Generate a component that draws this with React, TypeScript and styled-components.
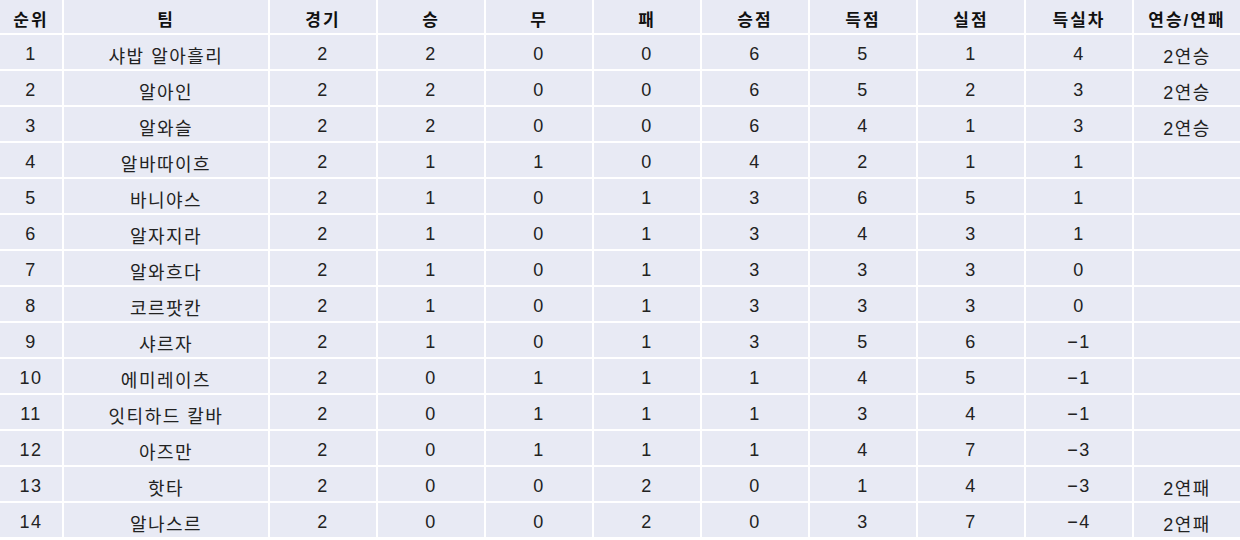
import React from 'react';
import styled, { createGlobalStyle } from 'styled-components';

const GlobalStyle = createGlobalStyle`
  html, body {
    margin: 0;
    padding: 0;
    background: #fff;
  }
  body {
    font-family: "Liberation Sans", "Noto Sans CJK KR", sans-serif;
    color: #222;
  }
`;

const Table = styled.div`
  display: grid;
  grid-template-columns: 62px 204px repeat(9, 106px);
  grid-auto-rows: 34px;
  grid-template-rows: 33px;
  gap: 2px;
  width: 1240px;
  background: #fff;
`;

const Cell = styled.div<{ $head?: boolean }>`
  display: flex;
  align-items: center;
  justify-content: center;
  padding-top: ${(p) => (p.$head ? '3px' : '5px')};
  box-sizing: border-box;
  background: #e8eaf4;
  font-size: ${(p) => (p.$head ? '17px' : '18px')};
  font-weight: ${(p) => (p.$head ? 700 : 400)};
  letter-spacing: ${(p) => (p.$head ? '2px' : '1.5px')};
  color: ${(p) => (p.$head ? '#111' : '#222')};
  white-space: nowrap;
`;

const headers = ['순위', '팀', '경기', '승', '무', '패', '승점', '득점', '실점', '득실차', '연승/연패'];

type Row = [string, number, number, number, number, number, number, number, string, string];

const rows: Row[] = [
  ['샤밥 알아흘리', 2, 2, 0, 0, 6, 5, 1, '4', '2연승'],
  ['알아인', 2, 2, 0, 0, 6, 5, 2, '3', '2연승'],
  ['알와슬', 2, 2, 0, 0, 6, 4, 1, '3', '2연승'],
  ['알바따이흐', 2, 1, 1, 0, 4, 2, 1, '1', ''],
  ['바니야스', 2, 1, 0, 1, 3, 6, 5, '1', ''],
  ['알자지라', 2, 1, 0, 1, 3, 4, 3, '1', ''],
  ['알와흐다', 2, 1, 0, 1, 3, 3, 3, '0', ''],
  ['코르팟칸', 2, 1, 0, 1, 3, 3, 3, '0', ''],
  ['샤르자', 2, 1, 0, 1, 3, 5, 6, '−1', ''],
  ['에미레이츠', 2, 0, 1, 1, 1, 4, 5, '−1', ''],
  ['잇티하드 칼바', 2, 0, 1, 1, 1, 3, 4, '−1', ''],
  ['아즈만', 2, 0, 1, 1, 1, 4, 7, '−3', ''],
  ['핫타', 2, 0, 0, 2, 0, 1, 4, '−3', '2연패'],
  ['알나스르', 2, 0, 0, 2, 0, 3, 7, '−4', '2연패'],
];

export default function App() {
  return (
    <>
      <GlobalStyle />
      <Table>
        {headers.map((h) => (
          <Cell key={h} $head>
            {h}
          </Cell>
        ))}
        {rows.map((r, i) => (
          <React.Fragment key={r[0]}>
            <Cell>{i + 1}</Cell>
            {r.map((v, j) => (
              <Cell key={j}>{v}</Cell>
            ))}
          </React.Fragment>
        ))}
      </Table>
    </>
  );
}
